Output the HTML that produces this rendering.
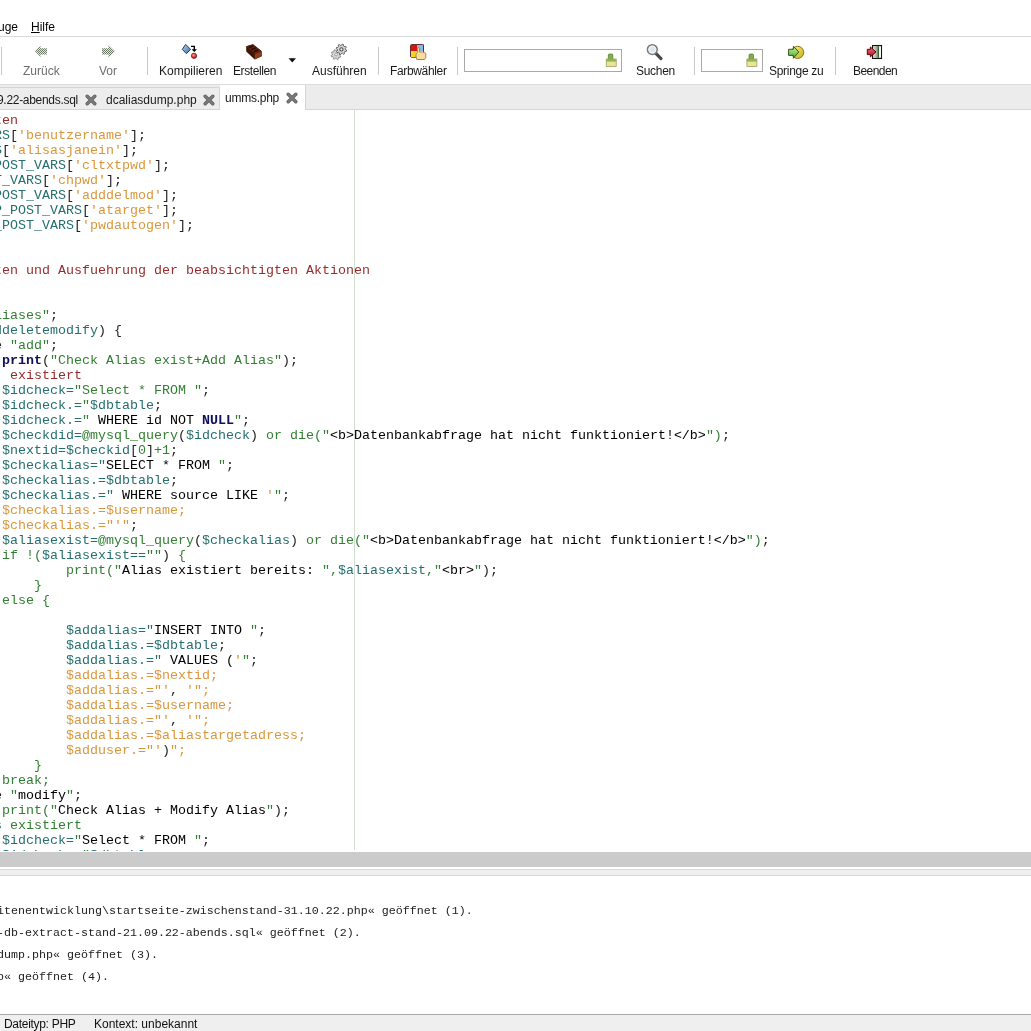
<!DOCTYPE html>
<html><head><meta charset="utf-8">
<style>
*{margin:0;padding:0;box-sizing:border-box}
html,body{width:1031px;height:1031px;overflow:hidden;background:#fff;position:relative}
body{font-family:"Liberation Sans",sans-serif;font-size:12px;color:#000;-webkit-font-smoothing:antialiased}
#code,#msg,.lbl,.menu,.tabt,.st{will-change:transform}
.abs{position:absolute}
#menubar{left:0;top:0;width:1031px;height:37px;background:#fff;border-bottom:1px solid #dadada}
.menu{position:absolute;top:20px;font-size:12px;line-height:14px;color:#000;white-space:nowrap}
#toolbar{left:0;top:37px;width:1031px;height:48px;background:#fff;border-bottom:1px solid #dcdcdc}
.sep{position:absolute;top:10px;width:1px;height:28px;background:#c9c9c9}
.lbl{position:absolute;top:27px;font-size:12px;line-height:14px;color:#1a1a1a;white-space:nowrap;text-align:center}
.lbl.dis{color:#6e6e6e}
.entry{position:absolute;top:12px;height:23px;border:1px solid #a9a9a9;background:#fff}
#tabbar{left:0;top:85px;width:1031px;height:25px;background:#ececec;border-bottom:1px solid #d5d5d5}
.tab{position:absolute;top:2px;height:23px;border-top:1px solid #d5d5d5;border-right:1px solid #d5d5d5;border-bottom:1px solid #d5d5d5;background:#ededed}
.tab.act{top:0;height:25px;background:#fff;border:none;border-right:1px solid #d5d5d5}
.tabt{position:absolute;top:5px;font-size:12px;line-height:14px;color:#1a1a1a;white-space:nowrap}
#editor{left:0;top:110px;width:1031px;height:741px;background:#fff;overflow:hidden}
#marker{left:354px;top:0;width:1px;height:740px;background:#cfe0cf}
#code{position:absolute;left:-6px;top:3px;font-family:"Liberation Mono",monospace;font-size:13.333px;line-height:15px;white-space:pre;color:#222}
.t{color:#256f6f}.g{color:#327f32}.o{color:#d9963c}.r{color:#982c2c}.k{color:#10105a;font-weight:bold}.b{color:#000}.d{color:#222}
#splitter{left:0;top:852px;width:1031px;height:15px;background:#cbcbcb}
#msgtop{left:0;top:869px;width:1031px;height:7px;background:#efefef;border-top:1px solid #d9d9d9;border-bottom:1px solid #d9d9d9}
#msg{position:absolute;left:-3.5px;top:900px;font-family:"Liberation Mono",monospace;font-size:11.667px;line-height:22px;white-space:pre;color:#222}
#status{left:0;top:1014px;width:1031px;height:17px;background:#efefef;border-top:1px solid #a9a9a9}
.st{position:absolute;top:2px;font-size:12px;line-height:14px;color:#111;white-space:nowrap}
</style></head><body>
<div id="menubar" class="abs">
  <div class="menu" style="left:-2px">uge</div>
  <div class="menu" style="left:31px"><u>H</u>ilfe</div>
</div>
<div id="toolbar" class="abs">
  <div class="sep" style="left:1px"></div>
  <div class="lbl dis" style="left:23px">Zurück</div>
  <div class="lbl dis" style="left:99px">Vor</div>
  <div class="sep" style="left:147px"></div>
  <div class="lbl" style="left:159px">Kompilieren</div>
  <div class="lbl" style="left:233px;letter-spacing:-0.4px">Erstellen</div>
  <div class="lbl" style="left:312px">Ausführen</div>
  <div class="sep" style="left:378px"></div>
  <div class="lbl" style="left:390px;letter-spacing:-0.35px">Farbwähler</div>
  <div class="sep" style="left:457px"></div>
  <div class="entry" style="left:464px;width:158px"></div>
  <div class="lbl" style="left:636px;letter-spacing:-0.3px">Suchen</div>
  <div class="sep" style="left:694px"></div>
  <div class="entry" style="left:701px;width:62px"></div>
  <div class="lbl" style="left:769px;letter-spacing:-0.3px">Springe zu</div>
  <div class="sep" style="left:835px"></div>
  <div class="lbl" style="left:853px;letter-spacing:-0.55px">Beenden</div>
</div>
<svg class="abs" style="left:0;top:0;pointer-events:none" width="1031" height="84" viewBox="0 0 1031 84">
<defs>
<pattern id="chk" x="0" y="0" width="2" height="2" patternUnits="userSpaceOnUse"><rect width="2" height="2" fill="#dcefd2"/><rect width="1" height="1" fill="#6a7a64"/><rect x="1" y="1" width="1" height="1" fill="#6a7a64"/></pattern>
<linearGradient id="gdia" x1="0" y1="0" x2="1" y2="1"><stop offset="0" stop-color="#b8d4f2"/><stop offset="1" stop-color="#3a6aa8"/></linearGradient>
<radialGradient id="gball" cx="0.4" cy="0.35" r="0.7"><stop offset="0" stop-color="#ff9a9a"/><stop offset="0.6" stop-color="#d8383a"/><stop offset="1" stop-color="#8a1010"/></radialGradient>
<linearGradient id="garr" x1="0" y1="0" x2="0" y2="1"><stop offset="0" stop-color="#c8f5a0"/><stop offset="1" stop-color="#4aa830"/></linearGradient>
<linearGradient id="gyel" x1="0" y1="0" x2="1" y2="1"><stop offset="0" stop-color="#fff080"/><stop offset="1" stop-color="#c8b018"/></linearGradient>
<linearGradient id="gred" x1="0" y1="0" x2="0" y2="1"><stop offset="0" stop-color="#f07080"/><stop offset="1" stop-color="#b01020"/></linearGradient>
<linearGradient id="gdoor" x1="0" y1="0" x2="1" y2="0"><stop offset="0" stop-color="#f4e8e0"/><stop offset="1" stop-color="#3a6a3a"/></linearGradient>
</defs>
<!-- Zurueck -->
<path d="M35 51.3 L40.5 45.8 V48.3 H47 V54.5 H40.5 V57 Z" fill="url(#chk)"/>
<!-- Vor -->
<path d="M115 51.3 L108.5 45 V48.3 H102 V54.5 H108.5 V57.5 Z" fill="url(#chk)"/>
<!-- Kompilieren -->
<path d="M182.3 49.4 L185.6 44.4 L190.7 49.4 L186.3 53.6 Z" fill="url(#gdia)" stroke="#27395a" stroke-width="1"/>
<path d="M191 46.4 H194.3 V50" fill="none" stroke="#000" stroke-width="1.4"/>
<path d="M191.6 49.3 H197 L194.3 52 Z" fill="#000"/>
<circle cx="194" cy="55.8" r="2.6" fill="url(#gball)" stroke="#7a1010" stroke-width="0.8"/>
<!-- Erstellen brick -->
<path d="M246.2 46.3 L253 44.2 L261.7 51.3 L261.7 56.3 L254.7 59.6 L246.2 51.5 Z" fill="#3c1607"/>
<path d="M246.2 46.3 L253 44.2 L261.7 51.3 L254.7 54 Z" fill="#5c2410"/>
<path d="M254.7 54 L261.7 51.3 L261.7 56.3 L254.7 59.6 Z" fill="#8a3d1a"/>
<path d="M248.8 47.6 L253.2 45.8 M251.3 49.6 L255.8 47.8 M253.8 51.6 L258.3 49.8" stroke="#280a02" stroke-width="1.4"/>
<!-- Gears -->
<path d="M339.82 55.35 L340.81 56.27 L340.29 57.33 L338.96 57.10 L338.20 57.77 L338.25 59.12 L337.13 59.49 L336.35 58.39 L335.35 58.32 L334.43 59.31 L333.37 58.79 L333.60 57.46 L332.93 56.70 L331.58 56.75 L331.21 55.63 L332.31 54.85 L332.38 53.85 L331.39 52.93 L331.91 51.87 L333.24 52.10 L334.00 51.43 L333.95 50.08 L335.07 49.71 L335.85 50.81 L336.85 50.88 L337.77 49.89 L338.83 50.41 L338.60 51.74 L339.27 52.50 L340.62 52.45 L340.99 53.57 L339.89 54.35 Z" fill="#d6d6d6" stroke="#8c8c8c" stroke-width="1" stroke-linejoin="round"/>
<circle cx="336.1" cy="54.5" r="1.4" fill="#eee" stroke="#9a9a9a" stroke-width="0.9"/>
<path d="M345.40 49.40 L346.65 50.15 L346.33 51.35 L344.87 51.38 L344.23 52.23 L344.58 53.64 L343.50 54.26 L342.46 53.26 L341.40 53.40 L340.65 54.65 L339.45 54.33 L339.42 52.87 L338.57 52.23 L337.16 52.58 L336.54 51.50 L337.54 50.46 L337.40 49.40 L336.15 48.65 L336.47 47.45 L337.93 47.42 L338.57 46.57 L338.22 45.16 L339.30 44.54 L340.34 45.54 L341.40 45.40 L342.15 44.15 L343.35 44.47 L343.38 45.93 L344.23 46.57 L345.64 46.22 L346.26 47.30 L345.26 48.34 Z" fill="#dadada" stroke="#5a5a5a" stroke-width="1" stroke-linejoin="round"/>
<circle cx="341.4" cy="49.4" r="1.6" fill="#fff" stroke="#444" stroke-width="1.1"/>
<!-- Farbwaehler -->
<rect x="410.5" y="44.5" width="13" height="12.8" rx="1.2" fill="#f6f0c0" stroke="#5a1a1a" stroke-width="0.9"/>
<rect x="411" y="45" width="6" height="6" fill="#d41414"/>
<rect x="417" y="45" width="6" height="6" fill="#8fb6e8"/>
<rect x="411" y="51" width="5.5" height="6" fill="#f0d428"/>
<path d="M423.5 44.5 V51" stroke="#2a3a6a" stroke-width="0.9"/>
<path d="M416.8 59.5 C415.8 57 415.8 54 416.5 53.2 L417.4 52.6 V48.6 C417.4 47.4 419.6 47.4 419.6 48.6 V52 H421.3 C422 51.6 422.8 51.8 423 52.3 C423.7 52 424.6 52.2 424.8 52.8 C425.6 52.8 425.8 53.4 425.8 54 V57.5 L424.6 59.5 Z" fill="#f8dca0" stroke="#a07a3a" stroke-width="0.9"/>
<!-- brush in search entry -->
<rect x="608.3" y="54" width="4.5" height="5.5" rx="1.2" fill="#7fb04a" stroke="#4a7a2a" stroke-width="0.7"/>
<rect x="606.2" y="59" width="10" height="7.4" fill="#ebe39a" stroke="#9a9050" stroke-width="0.7"/>
<rect x="606.2" y="59" width="10" height="2.6" fill="#8ab850"/>
<!-- magnifier -->
<path d="M655.6 53.2 L661 58.6" stroke="#4a4a4a" stroke-width="3.2" stroke-linecap="round"/>
<circle cx="652.3" cy="49.6" r="4.9" fill="#dfe7ec" stroke="#7a7a7a" stroke-width="1.5"/>
<circle cx="652.3" cy="49.6" r="3.5" fill="none" stroke="#fafafa" stroke-width="0.8"/>
<!-- brush in goto entry -->
<rect x="749" y="54" width="4.5" height="5.5" rx="1.2" fill="#7fb04a" stroke="#4a7a2a" stroke-width="0.7"/>
<rect x="746.9" y="59" width="10" height="7.4" fill="#ebe39a" stroke="#9a9050" stroke-width="0.7"/>
<rect x="746.9" y="59" width="10" height="2.6" fill="#8ab850"/>
<!-- Springe zu -->
<circle cx="797.6" cy="52.4" r="6.1" fill="url(#gyel)" stroke="#7a6a10" stroke-width="0.9"/>
<path d="M788.6 49.3 H793.4 V46.3 L798.8 51.9 L793.4 58.3 V55.4 H788.6 Z" fill="url(#garr)" stroke="#2f5a14" stroke-width="1"/>
<!-- Beenden -->
<rect x="872.5" y="45.5" width="9" height="13" fill="url(#gdoor)" stroke="#141414" stroke-width="1.1"/>
<rect x="879" y="46.3" width="2" height="11.4" fill="#f6f6f6"/>
<path d="M878.3 46.5 V57.5" stroke="#1e4a1e" stroke-width="0.9"/>
<path d="M867.3 49.3 H870.4 V47 L876 51.9 L870.4 56.8 V54.6 H867.3 Z" fill="url(#gred)" stroke="#5a0010" stroke-width="1"/>
</svg>

<svg class="abs" style="left:288px;top:58px" width="9" height="5" viewBox="0 0 9 5"><path d="M0.5 0.3 H8 L4.25 4.5 Z" fill="#111"/></svg>
<div id="tabbar" class="abs">
  <div class="tab" style="left:-10px;width:113px"><div class="tabt" style="right:24px;letter-spacing:-0.3px">9.22-abends.sql</div>
    <svg class="abs" style="left:95px;top:6px" width="12" height="12" viewBox="0 0 12 12"><path d="M2.2 2.2 L9.8 9.8 M9.8 2.2 L2.2 9.8" stroke="#5e5e5e" stroke-width="3.4" stroke-linecap="round"/><path d="M2.2 2.2 L9.8 9.8 M9.8 2.2 L2.2 9.8" stroke="#7a7a7a" stroke-width="2" stroke-linecap="round"/></svg></div>
  <div class="tab" style="left:102px;width:118px"><div class="tabt" style="left:4px">dcaliasdump.php</div>
    <svg class="abs" style="left:101px;top:6px" width="12" height="12" viewBox="0 0 12 12"><path d="M2.2 2.2 L9.8 9.8 M9.8 2.2 L2.2 9.8" stroke="#5e5e5e" stroke-width="3.4" stroke-linecap="round"/><path d="M2.2 2.2 L9.8 9.8 M9.8 2.2 L2.2 9.8" stroke="#7a7a7a" stroke-width="2" stroke-linecap="round"/></svg></div>
  <div class="tab act" style="left:220px;width:86px"><div class="tabt" style="left:5px;top:6px;letter-spacing:-0.25px">umms.php</div>
    <svg class="abs" style="left:66px;top:7px" width="12" height="12" viewBox="0 0 12 12"><path d="M2.2 2.2 L9.8 9.8 M9.8 2.2 L2.2 9.8" stroke="#5e5e5e" stroke-width="3.4" stroke-linecap="round"/><path d="M2.2 2.2 L9.8 9.8 M9.8 2.2 L2.2 9.8" stroke="#7a7a7a" stroke-width="2" stroke-linecap="round"/></svg></div>
</div>
<div id="editor" class="abs">
  <div id="marker" class="abs"></div>
  <div id="code"><span class="r">ten</span>
<span class="t">RS</span><span class="d">[</span><span class="o">&#x27;benutzername&#x27;</span><span class="d">];</span>
<span class="t">S</span><span class="d">[</span><span class="o">&#x27;alisasjanein&#x27;</span><span class="d">];</span>
<span class="t">POST_VARS</span><span class="d">[</span><span class="o">&#x27;cltxtpwd&#x27;</span><span class="d">];</span>
<span class="t">T_VARS</span><span class="d">[</span><span class="o">&#x27;chpwd&#x27;</span><span class="d">];</span>
<span class="t">POST_VARS</span><span class="d">[</span><span class="o">&#x27;adddelmod&#x27;</span><span class="d">];</span>
<span class="t">P_POST_VARS</span><span class="d">[</span><span class="o">&#x27;atarget&#x27;</span><span class="d">];</span>
<span class="t">_POST_VARS</span><span class="d">[</span><span class="o">&#x27;pwdautogen&#x27;</span><span class="d">];</span>


<span class="r">ten und Ausfuehrung der beabsichtigten Aktionen</span>


<span class="g">liases&quot;</span><span class="d">;</span>
<span class="t">ddeletemodify</span><span class="d">) {</span>
<span class="d">e </span><span class="g">&quot;add&quot;</span><span class="d">;</span>
<span class="d"> </span><span class="k">print</span><span class="d">(</span><span class="g">&quot;Check Alias exist+Add Alias&quot;</span><span class="d">);</span>
<span class="r">  existiert</span>
<span class="d"> </span><span class="t">$idcheck=</span><span class="g">&quot;Select * FROM &quot;</span><span class="d">;</span>
<span class="d"> </span><span class="t">$idcheck.=</span><span class="g">&quot;</span><span class="t">$dbtable</span><span class="d">;</span>
<span class="d"> </span><span class="t">$idcheck.=</span><span class="g">&quot;</span><span class="b"> WHERE id NOT </span><span class="k">NULL</span><span class="g">&quot;</span><span class="d">;</span>
<span class="d"> </span><span class="t">$checkdid=</span><span class="g">@mysql_query</span><span class="d">(</span><span class="t">$idcheck</span><span class="d">)</span><span class="g"> or die(&quot;</span><span class="b">&lt;b&gt;Datenbankabfrage hat nicht funktioniert!&lt;/b&gt;</span><span class="g">&quot;)</span><span class="d">;</span>
<span class="d"> </span><span class="t">$nextid=$checkid</span><span class="d">[</span><span class="g">0</span><span class="d">]</span><span class="g">+1</span><span class="d">;</span>
<span class="d"> </span><span class="t">$checkalias=&quot;</span><span class="b">SELECT * FROM </span><span class="g">&quot;</span><span class="d">;</span>
<span class="d"> </span><span class="t">$checkalias.=$dbtable</span><span class="d">;</span>
<span class="d"> </span><span class="t">$checkalias.=&quot;</span><span class="b"> WHERE source LIKE </span><span class="o">&#x27;</span><span class="g">&quot;</span><span class="d">;</span>
<span class="d"> </span><span class="o">$checkalias.=$username;</span>
<span class="d"> </span><span class="o">$checkalias.=&quot;&#x27;&quot;</span><span class="d">;</span>
<span class="d"> </span><span class="t">$aliasexist=</span><span class="g">@mysql_query</span><span class="d">(</span><span class="t">$checkalias</span><span class="d">)</span><span class="g"> or die(&quot;</span><span class="b">&lt;b&gt;Datenbankabfrage hat nicht funktioniert!&lt;/b&gt;</span><span class="g">&quot;)</span><span class="d">;</span>
<span class="d"> </span><span class="g">if !(</span><span class="t">$aliasexist==</span><span class="g">&quot;&quot;</span><span class="d">) </span><span class="g">{</span>
<span class="d">         </span><span class="g">print(&quot;</span><span class="b">Alias existiert bereits: </span><span class="g">&quot;,</span><span class="t">$aliasexist</span><span class="g">,&quot;</span><span class="b">&lt;br&gt;</span><span class="g">&quot;</span><span class="d">);</span>
<span class="g">     }</span>
<span class="g"> else {</span>

<span class="d">         </span><span class="t">$addalias=&quot;</span><span class="b">INSERT INTO </span><span class="g">&quot;</span><span class="d">;</span>
<span class="d">         </span><span class="t">$addalias.=$dbtable</span><span class="d">;</span>
<span class="d">         </span><span class="t">$addalias.=&quot;</span><span class="b"> VALUES (</span><span class="o">&#x27;</span><span class="g">&quot;</span><span class="d">;</span>
<span class="d">         </span><span class="o">$addalias.=$nextid;</span>
<span class="d">         </span><span class="o">$addalias.=&quot;&#x27;</span><span class="d">,</span><span class="o"> &#x27;&quot;;</span>
<span class="d">         </span><span class="o">$addalias.=$username;</span>
<span class="d">         </span><span class="o">$addalias.=&quot;&#x27;</span><span class="d">,</span><span class="o"> &#x27;&quot;;</span>
<span class="d">         </span><span class="o">$addalias.=$aliastargetadress;</span>
<span class="d">         </span><span class="o">$adduser.=&quot;&#x27;</span><span class="d">)</span><span class="o">&quot;;</span>
<span class="g">     }</span>
<span class="g"> break;</span>
<span class="d">e </span><span class="g">&quot;</span><span class="b">modify</span><span class="g">&quot;</span><span class="d">;</span>
<span class="g"> print(&quot;</span><span class="b">Check Alias + Modify Alias</span><span class="g">&quot;</span><span class="d">);</span>
<span class="t">s</span><span class="g"> existiert</span>
<span class="d"> </span><span class="t">$idcheck=</span><span class="g">&quot;</span><span class="b">Select * FROM </span><span class="g">&quot;</span><span class="d">;</span>
<span class="d"> </span><span class="t">$idcheck.=</span><span class="g">&quot;</span><span class="t">$dbtable</span><span class="d">;</span></div>
</div>
<div id="splitter" class="abs"></div>
<div id="msgtop" class="abs"></div>
<div id="msg">itenentwicklung\startseite-zwischenstand-31.10.22.php« geöffnet (1).
-db-extract-stand-21.09.22-abends.sql« geöffnet (2).
dump.php« geöffnet (3).
p« geöffnet (4).</div>
<div id="status" class="abs">
  <div class="st" style="left:4px;letter-spacing:-0.3px">Dateityp: PHP</div>
  <div class="st" style="left:94px">Kontext: unbekannt</div>
</div>
</body></html>
